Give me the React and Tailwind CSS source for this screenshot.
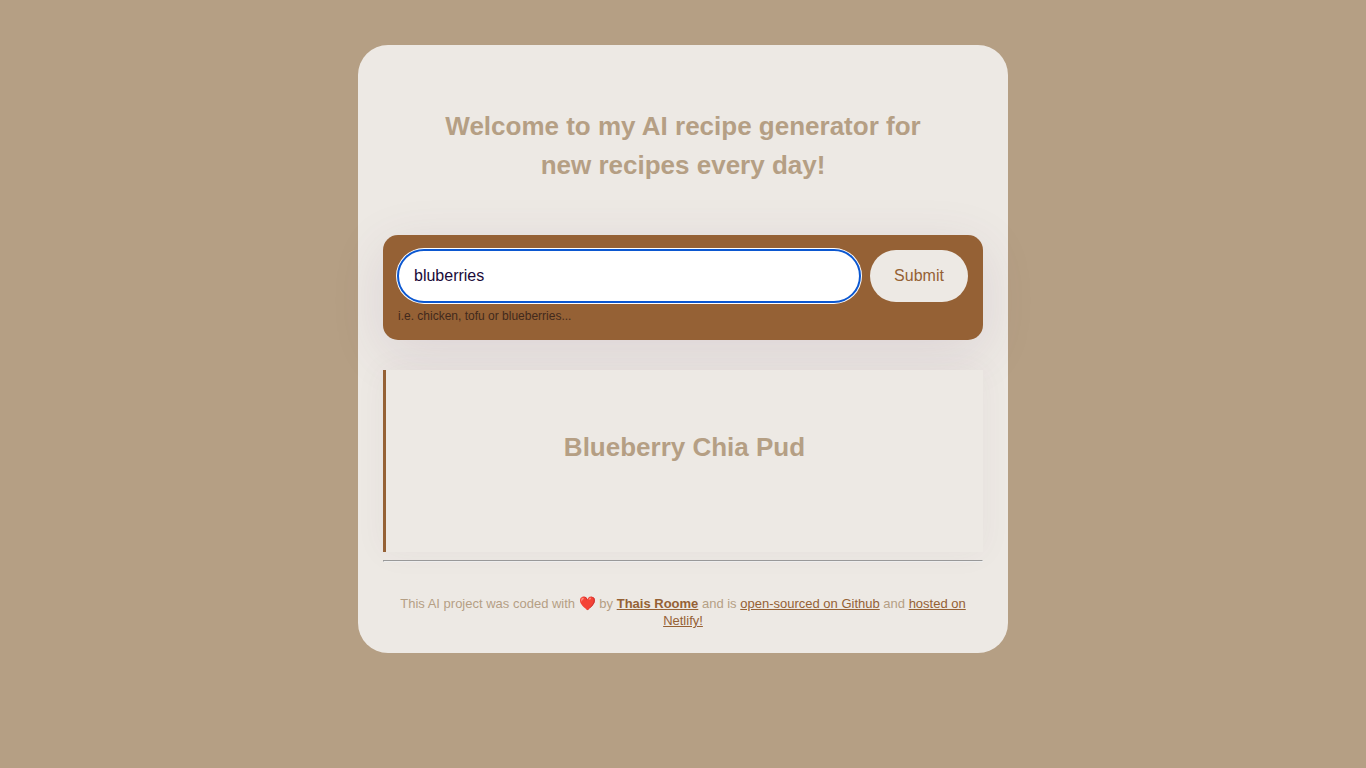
export default function App() {
  return (
    <div className="flow-root min-h-screen bg-[#b59f84] font-['Liberation_Sans',Arial,sans-serif] text-[#b59f84]">
      <main className="mx-auto mt-[45px] h-[608px] w-[650px] rounded-[30px] bg-[#ede9e4] px-[25px] pt-[62px]">
        <h1 className="mx-auto w-[500px] text-center text-[26px] leading-[39px] font-bold">
          Welcome to my AI recipe generator for new recipes every day!
        </h1>
        <form className="mt-[50px] h-[105px] rounded-[15px] bg-[#956135] p-[15px] shadow-[0_13px_54px_rgba(100,55,105,0.12)]" onSubmit={(e) => e.preventDefault()}>
          <div className="flex gap-[10px]">
            <input
              aria-label="Ingredient"
              defaultValue="bluberries"
              className="h-[52px] w-[462px] rounded-[30px] bg-white px-4 text-[16px] text-[#1a0a38] shadow-[0_0_0_2px_#fff] outline-2 -outline-offset-1 outline-[#0b57d0]"
            />
            <button className="h-[52px] w-[98px] rounded-[30px] bg-[#ede9e4] text-[16px] text-[#956135]">Submit</button>
          </div>
          <p className="mt-[6px] text-[12px] leading-[16px] text-[#42291c]">i.e. chicken, tofu or blueberries...</p>
        </form>
        <section className="mt-[30px] h-[182px] border-l-3 border-[#956135] bg-[#ede9e4] pt-[58px] shadow-[0_0_30px_rgba(100,55,105,0.05)]">
          <h2 className="text-center text-[26px] leading-[39px] font-bold">Blueberry Chia Pud</h2>
        </section>
        <hr className="mt-2 h-[2px] border border-t-[#999] border-r-[#eee] border-b-[#eee] border-l-[#999]" />
        <footer className="mt-[33px] flex flex-wrap justify-center px-[15px] text-center text-[13px] leading-[17px] whitespace-pre">
          <span>This AI project was coded with </span>
          <span className="w-[17px] text-[13.5px]">❤️</span>
          <span> by </span>
          <a className="font-bold text-[#956135] underline">Thais Roome</a>
          <span> and is </span>
          <a className="text-[#956135] underline">open-sourced on Github</a>
          <span> and </span>
          <a className="text-[#956135] underline">hosted on</a>
          <a className="w-full text-[#956135] underline">Netlify!</a>
        </footer>
      </main>
    </div>
  );
}
